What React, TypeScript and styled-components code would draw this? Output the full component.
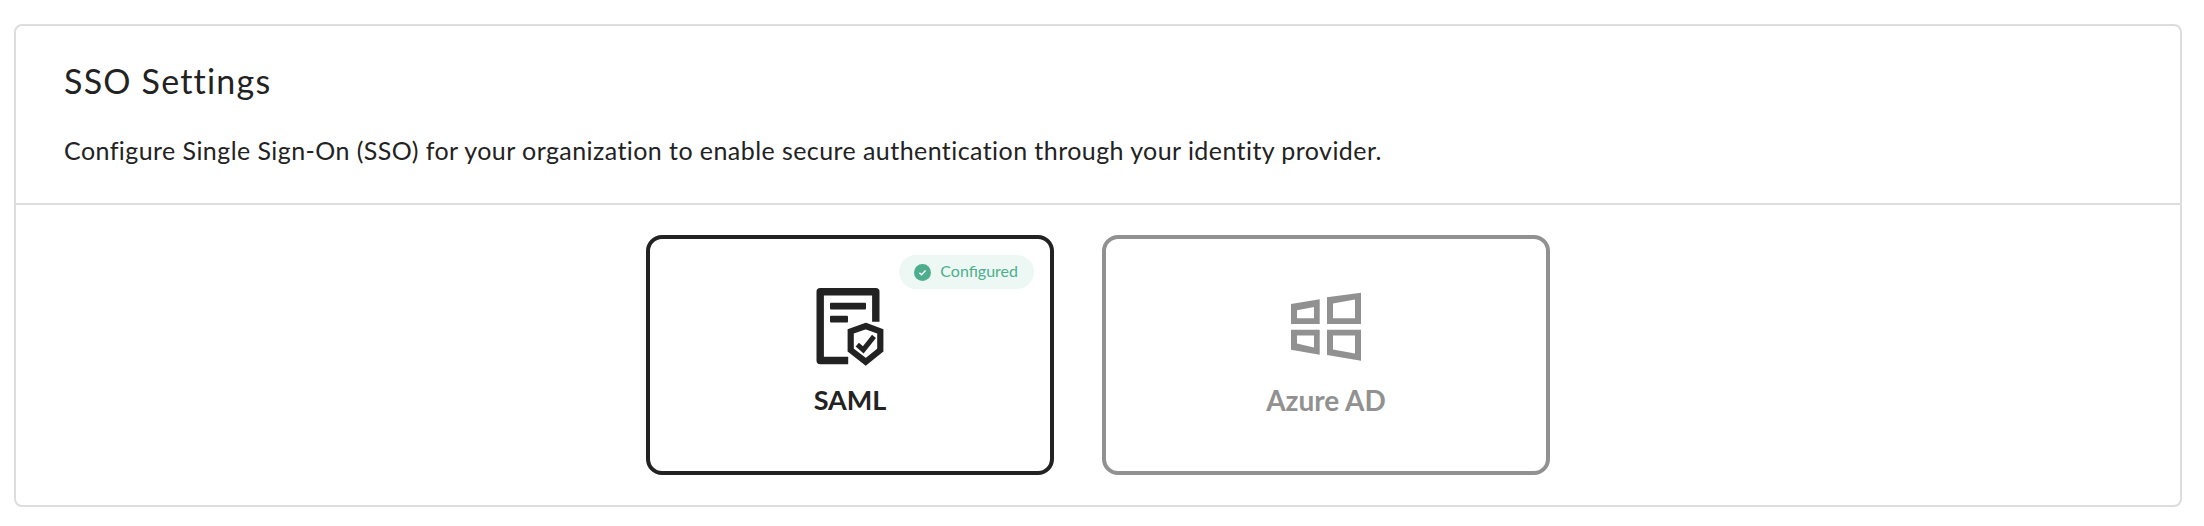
import React from "react";
import styled, { createGlobalStyle } from "styled-components";

const GlobalStyle = createGlobalStyle`
  html, body {
    margin: 0;
    padding: 0;
    background: #fff;
    font-family: "Lato", "Liberation Sans", sans-serif;
    color: #222;
  }
`;

function SamlIcon() {
  return (
    <svg width="80" height="80" viewBox="0 0 80 80" fill="none" stroke="currentColor">
      <path d="M65.8 35.7V5.8H10.2V74.5h28" strokeWidth="7.4" strokeLinejoin="round" />
      <rect x="20" y="16.8" width="36" height="6.8" rx="1" fill="currentColor" stroke="none" />
      <rect x="20" y="29.8" width="18" height="6.8" rx="1" fill="currentColor" stroke="none" />
      <path d="M55.7 40L70.3 45.4V64.1L55.7 75.8L40.7 64.1V45.4Z" strokeWidth="6.2" />
      <path d="M47.3 58.6L53.3 63.8L64 50.4" strokeWidth="5" />
    </svg>
  );
}

function WindowsIcon() {
  return (
    <svg width="80" height="80" viewBox="0 0 80 80" fill="currentColor">
      <path
        fillRule="evenodd"
        d="M5 18L33.7 13.3V38H5ZM11 24.2V32.2H28V21Z
           M41 11.3L75 6.7V38H41ZM47 17.6V32.2H69V13.6Z
           M5 43.7H33.7V68.7L5 63.7ZM11 49.6V57.4L28 61.6V49.6Z
           M41 43.7H75V74.7L41 69ZM47 49.6V63.6L69 67.6V49.6Z"
      />
    </svg>
  );
}

function App() {
  return (
    <Page>
      <GlobalStyle />
      <Panel>
        <PanelHead>
          <Title>SSO Settings</Title>
          <Description>
            Configure Single Sign-On (SSO) for your organization to enable secure
            authentication through your identity provider.
          </Description>
        </PanelHead>
        <PanelBody>
          <Provider $width={408}>
            <Badge>
              <svg width="17" height="17" viewBox="0 0 17 17">
                <circle cx="8.5" cy="8.5" r="8.5" fill="#4cae8c" />
                <path d="M5.4 8.7L7.6 10.8L11.5 6.6" fill="none" stroke="#fff" strokeWidth="1.5" />
              </svg>
              <BadgeLabel>Configured</BadgeLabel>
            </Badge>
            <SamlIcon />
            <ProviderName $size={27}>SAML</ProviderName>
          </Provider>
          <Provider $width={448} $disabled>
            <WindowsIcon />
            <ProviderName $size={28}>Azure AD</ProviderName>
          </Provider>
        </PanelBody>
      </Panel>
    </Page>
  );
}

const Page = styled.div`
  padding: 24px 22px 19px 14px;
`;

const Panel = styled.section`
  border: 2px solid #ddd;
  border-radius: 8px;
  background: #fff;
`;

const PanelHead = styled.header`
  height: 146px;
  padding: 31px 48px 0;
  border-bottom: 2px solid #ddd;
`;

const Title = styled.h2`
  margin: 0;
  font-size: 34px;
  line-height: 48px;
  font-weight: 400;
  letter-spacing: 1.2px;
  color: #222;
`;

const Description = styled.p`
  margin: 27px 0 0;
  font-size: 25px;
  line-height: 36px;
  font-weight: 400;
  letter-spacing: 0.43px;
  color: #222;
`;

const PanelBody = styled.div`
  display: flex;
  justify-content: center;
  gap: 48px;
  padding: 30px 0;
`;

const Provider = styled.div<{ $width: number; $disabled?: boolean }>`
  position: relative;
  width: ${(p) => p.$width}px;
  height: 240px;
  box-sizing: border-box;
  display: flex;
  flex-direction: column;
  align-items: center;
  padding-top: 47px;
  border: 4px solid ${(p) => (p.$disabled ? "#919191" : "#222")};
  border-radius: 16px;
  color: ${(p) => (p.$disabled ? "#919191" : "#222")};
`;

const ProviderName = styled.div<{ $size: number }>`
  margin-top: 18px;
  font-size: ${(p) => p.$size}px;
  line-height: 32px;
  font-weight: 700;
`;

const Badge = styled.div`
  position: absolute;
  top: 16px;
  right: 16px;
  height: 34px;
  display: flex;
  align-items: center;
  gap: 9px;
  padding: 0 16px 0 15px;
  border-radius: 17px;
  background: #edf8f4;
  color: #4cae8c;
  font-size: 16px;
`;

const BadgeLabel = styled.span`
  margin-top: -3px;
`;

export default App;
